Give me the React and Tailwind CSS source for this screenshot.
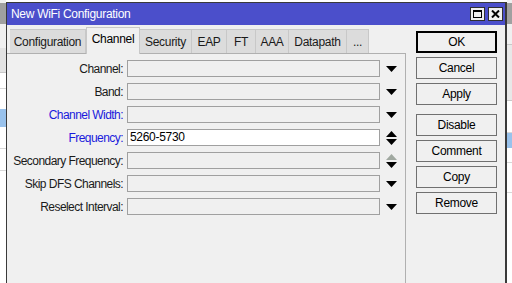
import React from 'react';

const font = { fontFamily: '"Liberation Sans", Arial, sans-serif' };

// Triangle arrows used next to the combo boxes
function DownArrow({ color = '#000' }) {
  return (
    <svg width="11" height="6" viewBox="0 0 11 6">
      <polygon points="0,0 11,0 5.5,6" fill={color} />
    </svg>
  );
}

function UpArrow({ color = '#000' }) {
  return (
    <svg width="11" height="6" viewBox="0 0 11 6">
      <polygon points="0,6 11,6 5.5,0" fill={color} />
    </svg>
  );
}

const tabs = [
  { text: 'Configuration', w: 'w-[76px]' },
  { text: 'Channel', w: 'w-[54px]', active: true },
  { text: 'Security', w: 'w-[52px]' },
  { text: 'EAP', w: 'w-[35px]' },
  { text: 'FT', w: 'w-[29px]' },
  { text: 'AAA', w: 'w-[33px]' },
  { text: 'Datapath', w: 'w-[58px]' },
  { text: '...', w: 'w-[22px]' },
];

const rows = [
  { label: 'Channel:', kind: 'combo' },
  { label: 'Band:', kind: 'combo' },
  { label: 'Channel Width:', kind: 'combo', blue: true },
  { label: 'Frequency:', kind: 'spin', blue: true, value: '5260-5730' },
  { label: 'Secondary Frequency:', kind: 'spinOff' },
  { label: 'Skip DFS Channels:', kind: 'combo' },
  { label: 'Reselect Interval:', kind: 'combo' },
];

const buttons = [
  { text: 'OK', main: true },
  { text: 'Cancel' },
  { text: 'Apply', gapAfter: true },
  { text: 'Disable' },
  { text: 'Comment' },
  { text: 'Copy' },
  { text: 'Remove' },
];

function Row({ row }) {
  return (
    <div className="flex items-center h-[17px] mb-[6px]">
      <div
        className={`w-[117px] pr-[4px] text-right text-[12px] leading-none whitespace-nowrap tracking-[-0.55px] ${
          row.blue ? 'text-[#1a1adc]' : 'text-[#1a1a1a]'
        }`}
      >
        {row.label}
      </div>
      <div
        className={`w-[253px] h-[17px] border border-[#a0a0a0] text-[12px] leading-[15px] px-[2px] ${
          row.value ? 'bg-white text-black' : 'bg-[#f0f0f0]'
        }`}
      >
        {row.value}
      </div>
      <div className="w-[11px] ml-[6px] flex flex-col items-center justify-center gap-[2px]">
        {row.kind === 'combo' && <DownArrow />}
        {row.kind === 'spin' && (
          <>
            <UpArrow />
            <DownArrow />
          </>
        )}
        {row.kind === 'spinOff' && (
          <>
            <UpArrow color="#a0a8a0" />
            <DownArrow />
          </>
        )}
      </div>
    </div>
  );
}

export default function App() {
  return (
    <div className="w-[512px] h-[283px] flex overflow-hidden bg-white tracking-[-0.3px]" style={font}>
      {/* Left strip of the window behind */}
      <div className="w-[6px] flex flex-col">
        <div className="h-[3px] bg-[#f0f0f0]" />
        <div className="h-[21px] bg-[#a0a0a0]" />
        <div className="h-[24px] bg-[#f0f0f0]" />
        <div className="h-[25px] bg-[#e3e3e3] border-b border-[#c8c8c8]" />
        <div className="h-[16px] bg-white border-b border-[#d8d8d8]" />
        <div className="h-[20px] bg-white" />
        <div className="h-[18px] bg-[#99c2ec]" />
        <div className="h-[22px] bg-white border-b border-[#d8d8d8]" />
        <div className="h-[22px] bg-white border-b border-[#d8d8d8]" />
        <div className="flex-1 bg-white" />
      </div>

      {/* Dialog window */}
      <div className="mt-[2px] w-[501px] flex flex-col border-l border-r-2 border-t border-[#3a3a3a] bg-[#f0f0f0]">
        {/* Title bar */}
        <div className="h-[22px] bg-[#4b4fcb] flex items-center justify-between pl-[4px] pr-[2px]">
          <span className="text-white text-[12px]">New WiFi Configuration</span>
          <div className="flex gap-[3px]">
            <div className="w-[15px] h-[14px] bg-[#f0f0f0] border border-[#303030] flex items-center justify-center">
              <div className="w-[9px] h-[8px] border border-black border-t-2" />
            </div>
            <div className="w-[15px] h-[14px] bg-[#f0f0f0] border border-[#303030] flex items-center justify-center">
              <svg width="9" height="8" viewBox="0 0 9 8">
                <path d="M1 0.5 L8 7.5 M8 0.5 L1 7.5" stroke="#000" strokeWidth="2" />
              </svg>
            </div>
          </div>
        </div>

        <div className="flex flex-1">
          {/* Tabs and form */}
          <div className="w-[399px] flex flex-col">
            <div className="flex items-end h-[28px] pl-[3px]">
              {tabs.map((t) =>
                t.active ? (
                  <div
                    key={t.text}
                    className={`${t.w} h-[27px] text-center bg-[#f0f0f0] border-l border-t border-r border-[#c8c8c8] text-[12px] leading-[22px] text-black -mb-[1px] relative z-10`}
                  >
                    {t.text}
                  </div>
                ) : (
                  <div
                    key={t.text}
                    className={`${t.w} h-[24px] text-center bg-[#dcdcdc] border-r border-t border-[#c8c8c8] text-[12px] leading-[24px] text-[#1a1a1a]`}
                  >
                    {t.text}
                  </div>
                )
              )}
            </div>
            <div className="flex-1 border-t border-r border-[#b0b0b0] pt-[6px] pl-[3px]">
              {rows.map((r) => (
                <Row key={r.label} row={r} />
              ))}
            </div>
          </div>

          {/* Buttons */}
          <div className="flex flex-col pt-[6px] pl-[10px]">
            {buttons.map((b) => (
              <div
                key={b.text}
                className={`w-[81px] h-[22px] flex items-center justify-center text-[12px] text-black bg-[#f0f0f0] ${
                  b.main ? 'border-2 border-black' : 'border border-[#707070]'
                } ${b.gapAfter ? 'mb-[9px]' : 'mb-[4px]'}`}
              >
                {b.text}
              </div>
            ))}
          </div>
        </div>
      </div>

      {/* Right strip of the window behind */}
      <div className="flex-1 flex flex-col">
        <div className="h-[3px] bg-[#f0f0f0]" />
        <div className="h-[21px] bg-[#a0a0a0]" />
        <div className="h-[21px] bg-[#f0f0f0] border-b border-[#c8c8c8]" />
        <div className="h-[56px] bg-[#e8e8e8] border-b border-[#c8c8c8]" />
        <div className="h-[32px] bg-white border-b border-[#d8d8d8]" />
        <div className="h-[15px] bg-[#99c2ec]" />
        <div className="h-[15px] bg-white border-b border-[#d8d8d8]" />
        <div className="h-[30px] bg-white border-b border-[#d8d8d8]" />
        <div className="flex-1 bg-white" />
      </div>
    </div>
  );
}
